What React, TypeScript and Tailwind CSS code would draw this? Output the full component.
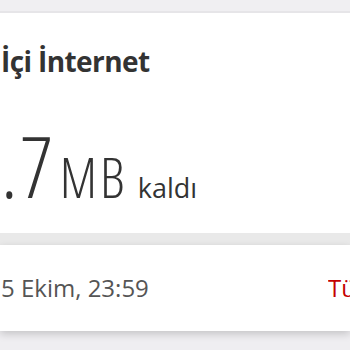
import React from "react";

export default function App() {
  return (
    <div className="w-[350px] h-[350px] overflow-hidden bg-[#efeef1] font-['Open_Sans',sans-serif] flex flex-col">
      <div className="h-[11px] shrink-0 bg-[#f0eff2]" />
      <div className="shrink-0 h-[222px] bg-white border-t-2 border-[#e6e5e8] flex flex-col">
        <div className="pt-[30px] pl-[1px] text-[28px] leading-[36px] font-bold tracking-[-0.6px] text-[#333333] whitespace-nowrap">
          İçi İnternet
        </div>
        <div className="mt-[47px] flex items-baseline whitespace-nowrap text-[#333333]">
          <span className="text-[84px] leading-[80px] font-light font-stretch-condensed tracking-[2px] ml-[1px]">.7</span>
          <span className="text-[55px] leading-[52px] font-light font-stretch-condensed tracking-[3px] ml-[4px]">MB</span>
          <span className="text-[27px] leading-[26px] ml-[10px]">kaldı</span>
        </div>
      </div>
      <div className="h-[12px] shrink-0 bg-[#e9e9e9]" />
      <div className="shrink-0 h-[86px] bg-white flex items-center justify-between whitespace-nowrap shadow-[0_3px_8px_rgba(0,0,0,0.18)] relative">
        <span className="text-[24px] text-[#555555] pl-[1px]">5 Ekim, 23:59</span>
        <span className="text-[24px] text-[#c40000] w-[22px] overflow-hidden">Tü</span>
      </div>
      <div className="flex-1 bg-[#efeef1]" />
    </div>
  );
}
